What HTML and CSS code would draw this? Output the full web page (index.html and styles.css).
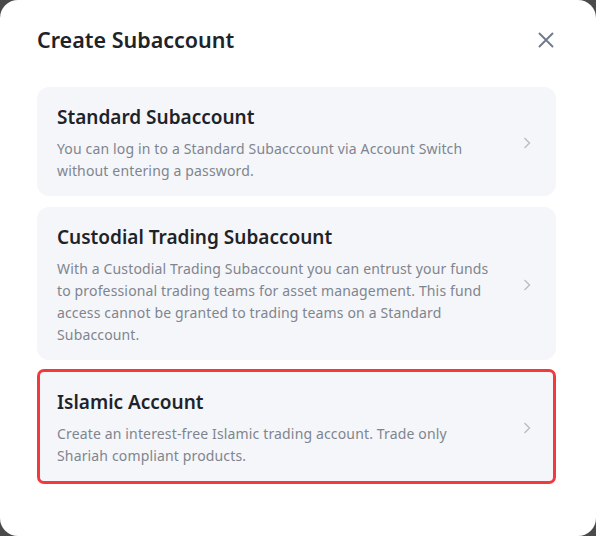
FILE: index.html
```html
<!DOCTYPE html>
<html lang="en">
<head>
<meta charset="utf-8">
<title>Create Subaccount</title>
<link rel="stylesheet" href="styles.css">
</head>
<body>
<div class="modal">
  <div class="header">
    <h1 class="title">Create Subaccount</h1>
    <button class="close" aria-label="Close">
      <svg width="16" height="16" viewBox="0 0 16 16"><path d="M1.5 1.5 L14.5 14.5 M14.5 1.5 L1.5 14.5" stroke="#707a8a" stroke-width="1.9" stroke-linecap="round" fill="none"/></svg>
    </button>
  </div>
  <div class="list">
    <div class="card">
      <div class="content">
        <div class="card-title">Standard Subaccount</div>
        <div class="desc">You can log in to a Standard Subacccount via Account Switch without entering a password.</div>
      </div>
      <svg class="chev" width="8" height="12" viewBox="0 0 8 12"><path d="M1.5 1 L6.5 6 L1.5 11" stroke="#b7bdc6" stroke-width="1.4" fill="none"/></svg>
    </div>
    <div class="card">
      <div class="content">
        <div class="card-title">Custodial Trading Subaccount</div>
        <div class="desc">With a Custodial Trading Subaccount you can entrust your funds to professional trading teams for asset management. This fund access cannot be granted to trading teams on a Standard Subaccount.</div>
      </div>
      <svg class="chev" width="8" height="12" viewBox="0 0 8 12"><path d="M1.5 1 L6.5 6 L1.5 11" stroke="#b7bdc6" stroke-width="1.4" fill="none"/></svg>
    </div>
    <div class="card card-selected">
      <div class="content">
        <div class="card-title">Islamic Account</div>
        <div class="desc">Create an interest-free Islamic trading account. Trade only Shariah compliant products.</div>
      </div>
      <svg class="chev" width="8" height="12" viewBox="0 0 8 12"><path d="M1.5 1 L6.5 6 L1.5 11" stroke="#b7bdc6" stroke-width="1.4" fill="none"/></svg>
    </div>
  </div>
</div>
</body>
</html>
```

FILE: styles.css
```css
html, body {
  margin: 0;
  padding: 0;
  height: 100%;
  background: #4a4a4a;
}
body {
  font-family: "Noto Sans", "Open Sans", Arial, sans-serif;
  color: #1e2329;
}
.modal {
  box-sizing: border-box;
  width: 596px;
  height: 536px;
  background: #ffffff;
  border-radius: 18px;
  padding: 24px 40px 0 37px;
}
.header {
  display: flex;
  align-items: center;
  justify-content: space-between;
  height: 32px;
}
.title {
  margin: 0;
  font-size: 21.5px;
  line-height: 32px;
  font-weight: 600;
  color: #1e2329;
}
.close {
  border: 0;
  background: none;
  padding: 0;
  width: 16px;
  height: 16px;
  margin-right: 2px;
  display: flex;
  cursor: pointer;
}
.list {
  margin-top: 31px;
  display: flex;
  flex-direction: column;
  gap: 11px;
}
.card {
  display: flex;
  align-items: center;
  gap: 28px;
  background: #f5f6f9;
  border-radius: 12px;
  padding: 17px 25px 14px 20px;
}
.card-selected {
  margin-top: -2px;
  border: 3px solid #f03a3e;
  border-radius: 7px;
  padding: 17px 22px 14px 17px;
}
.content {
  flex: 1;
  min-width: 0;
}
.card-title {
  font-size: 19px;
  line-height: 26px;
  font-weight: 600;
  color: #1e2329;
  margin-bottom: 8px;
}
.desc {
  font-size: 14px;
  line-height: 22px;
  letter-spacing: 0.15px;
  color: #7f858f;
}
.chev {
  flex: none;
}
```
